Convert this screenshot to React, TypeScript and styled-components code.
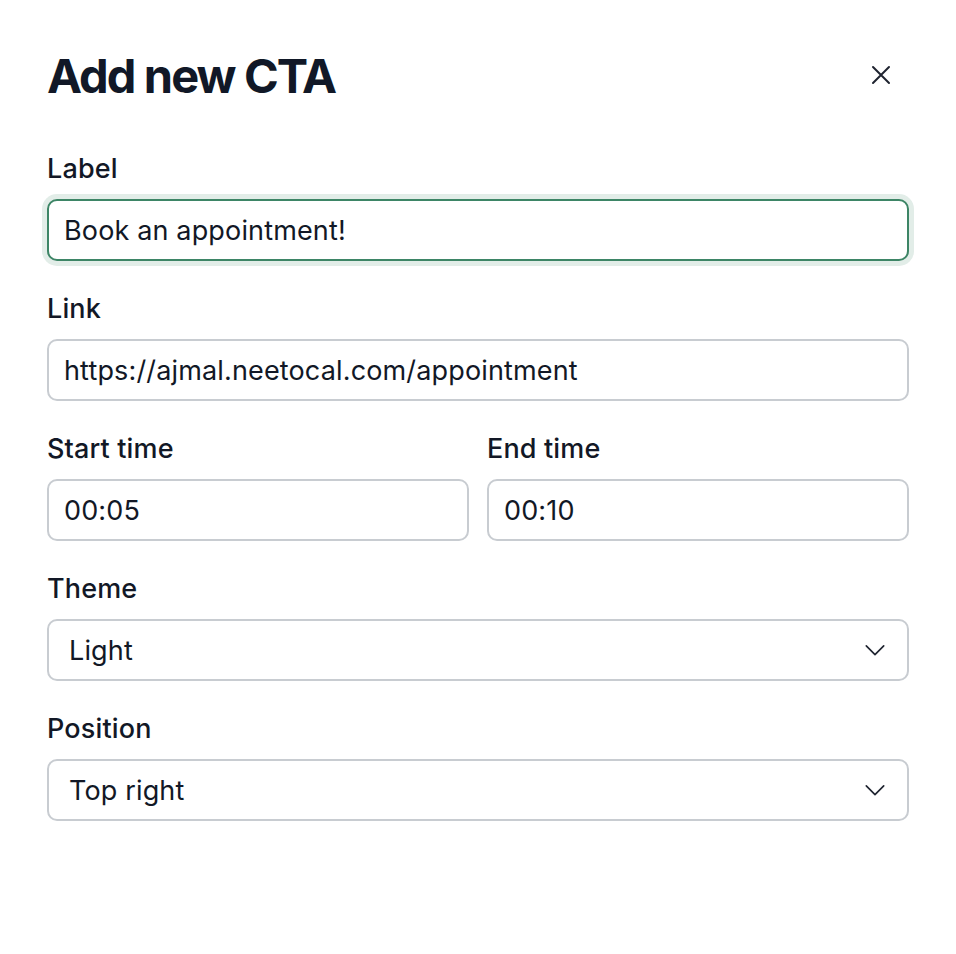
import React, { useEffect, useRef, useState } from 'react';
import styled, { createGlobalStyle } from 'styled-components';

const GlobalStyle = createGlobalStyle`
  * { box-sizing: border-box; }
  body {
    margin: 0;
    background: #ffffff;
    font-family: Inter, "Noto Sans", "Liberation Sans", sans-serif;
    color: #121826;
  }
`;

const Pane = styled.div`
  width: 956px;
  min-height: 954px;
  padding: 47px 47px 0;
  background: #ffffff;
`;

const Header = styled.div`
  display: flex;
  align-items: center;
  justify-content: space-between;
  height: 58px;
  margin-bottom: 48px;
`;

const Title = styled.h2`
  margin: 0;
  font-size: 47px;
  line-height: 58px;
  font-weight: 700;
  letter-spacing: -1.9px;
  color: #111827;
`;

const CloseButton = styled.button`
  display: flex;
  align-items: center;
  justify-content: center;
  width: 36px;
  height: 36px;
  margin: -2px 10px 0 0;
  padding: 0;
  border: none;
  background: transparent;
  color: #1f2430;
  cursor: pointer;
`;

const Form = styled.form`
  display: flex;
  flex-direction: column;
  gap: 32px;
`;

const Row = styled.div`
  display: grid;
  grid-template-columns: 1fr 1fr;
  gap: 18px;
`;

const Field = styled.div`
  display: flex;
  flex-direction: column;
`;

const Label = styled.label`
  font-size: 27px;
  line-height: 32px;
  font-weight: 500;
  letter-spacing: 0.15px;
  color: #121826;
  margin-bottom: 14px;
`;

const Input = styled.input<{ $focused?: boolean }>`
  height: 62px;
  width: 100%;
  padding: 0 15px;
  font-family: inherit;
  font-size: 27px;
  letter-spacing: 0.15px;
  color: #121826;
  background: #ffffff;
  border: 2px solid ${({ $focused }) => ($focused ? '#3d8566' : '#c8ccd1')};
  border-radius: 10px;
  outline: none;
  box-shadow: ${({ $focused }) => ($focused ? '0 0 0 5px #e2ede8' : 'none')};
  caret-color: #121826;
`;

const SelectBox = styled.div`
  display: flex;
  align-items: center;
  justify-content: space-between;
  height: 62px;
  padding: 0 21px 0 20px;
  font-size: 27px;
  letter-spacing: 0.15px;
  color: #121826;
  border: 2px solid #c8ccd1;
  border-radius: 10px;
  background: #ffffff;
  cursor: pointer;
`;

const Chevron = () => (
  <svg width="22" height="22" viewBox="0 0 24 24" fill="none" stroke="#1f2430" strokeWidth="1.8" strokeLinecap="round" strokeLinejoin="round">
    <path d="M2.5 7.5l9.5 9.5 9.5-9.5" />
  </svg>
);

const CloseIcon = () => (
  <svg width="20" height="20" viewBox="0 0 20 20" fill="none" stroke="#1f2430" strokeWidth="2" strokeLinecap="round">
    <path d="M2 2l16 16M18 2L2 18" />
  </svg>
);

function Select({ value }: { value: string }) {
  return (
    <SelectBox>
      <span>{value}</span>
      <Chevron />
    </SelectBox>
  );
}

export default function App() {
  const [label, setLabel] = useState('Book an appointment!');
  const [link, setLink] = useState('https://ajmal.neetocal.com/appointment');
  const [start, setStart] = useState('00:05');
  const [end, setEnd] = useState('00:10');
  const labelRef = useRef<HTMLInputElement>(null);

  useEffect(() => {
    const el = labelRef.current;
    if (el) {
      el.focus();
      el.setSelectionRange(el.value.length, el.value.length);
    }
  }, []);

  return (
    <>
      <GlobalStyle />
      <Pane>
        <Header>
          <Title>Add new CTA</Title>
          <CloseButton aria-label="Close">
            <CloseIcon />
          </CloseButton>
        </Header>
        <Form onSubmit={e => e.preventDefault()}>
          <Field>
            <Label>Label</Label>
            <Input ref={labelRef} $focused value={label} onChange={e => setLabel(e.target.value)} />
          </Field>
          <Field>
            <Label>Link</Label>
            <Input value={link} onChange={e => setLink(e.target.value)} />
          </Field>
          <Row>
            <Field>
              <Label>Start time</Label>
              <Input value={start} onChange={e => setStart(e.target.value)} />
            </Field>
            <Field>
              <Label>End time</Label>
              <Input value={end} onChange={e => setEnd(e.target.value)} />
            </Field>
          </Row>
          <Field>
            <Label>Theme</Label>
            <Select value="Light" />
          </Field>
          <Field>
            <Label>Position</Label>
            <Select value="Top right" />
          </Field>
        </Form>
      </Pane>
    </>
  );
}
